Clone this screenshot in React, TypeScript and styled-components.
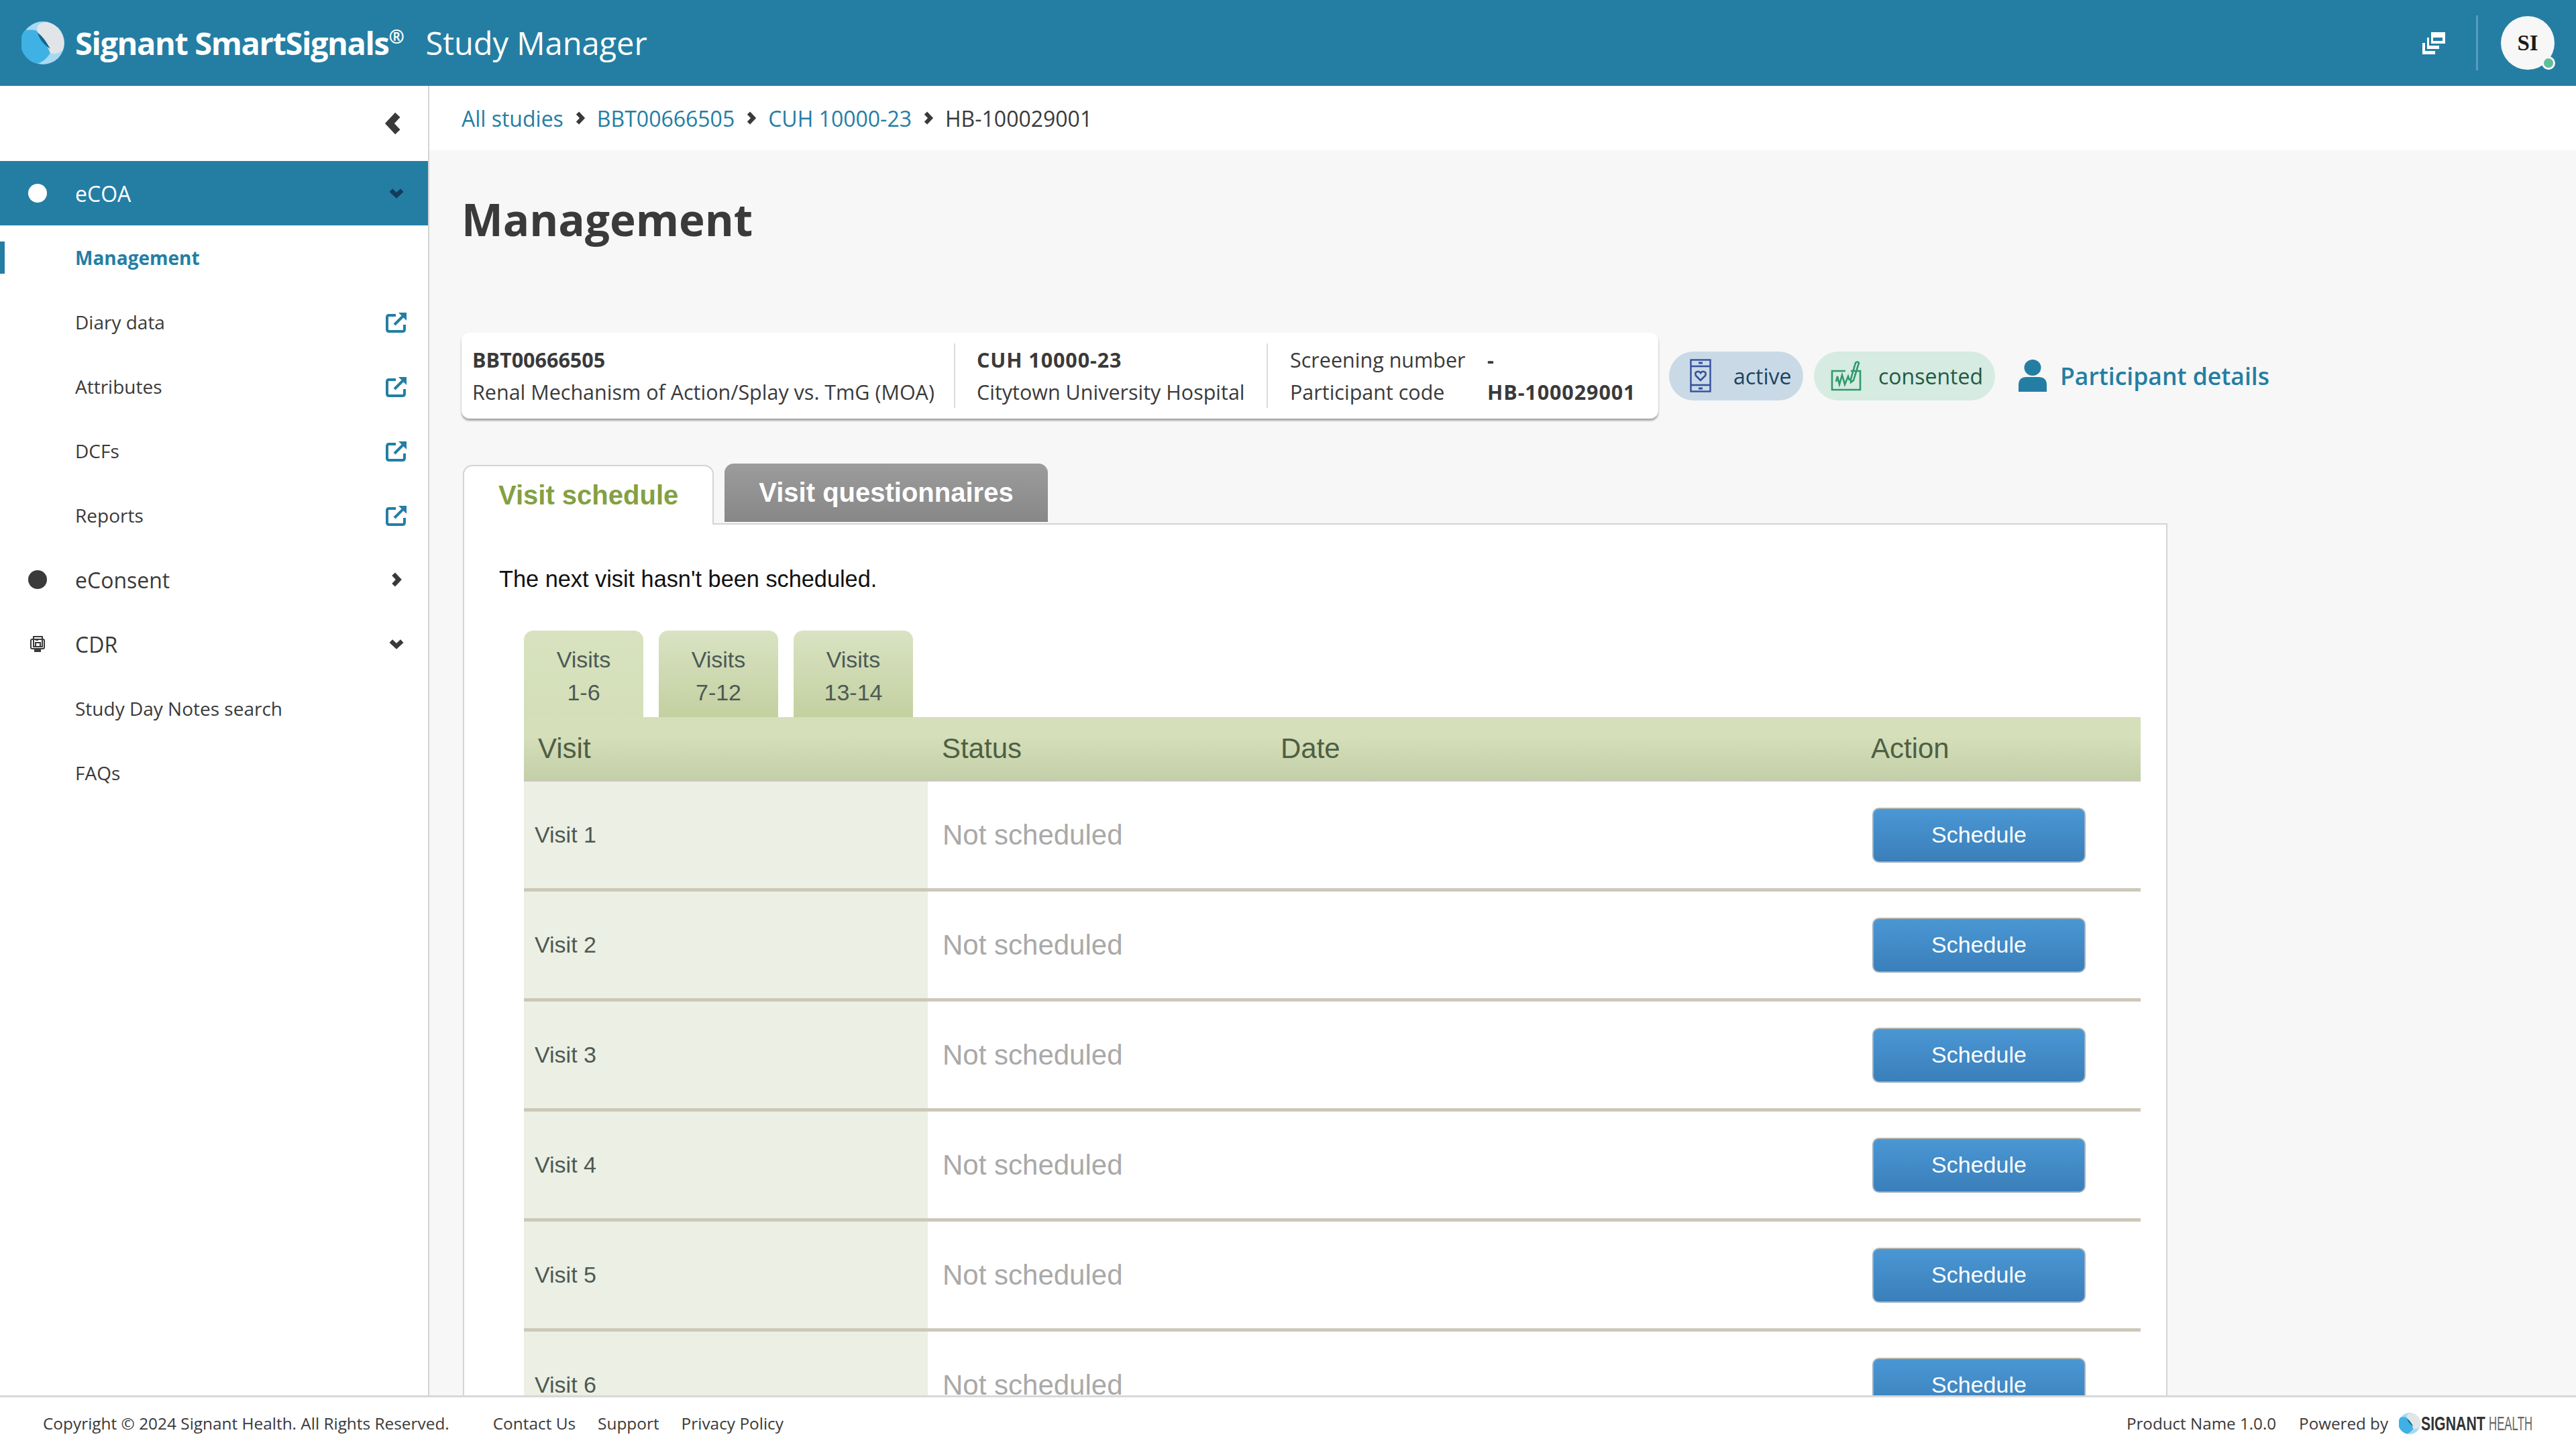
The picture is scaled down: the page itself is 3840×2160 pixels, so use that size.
import React from 'react'
import styled, { createGlobalStyle } from 'styled-components'

const GlobalStyle = createGlobalStyle`
  html, body {
    margin: 0;
    padding: 0;
    background: #fff;
  }
  * {
    box-sizing: border-box;
  }
`

const TEAL = '#247ea3'
const SANS = `"Open Sans", "Noto Sans", sans-serif`
const ARIAL = `"Liberation Sans", Arial, sans-serif`

const ROTATION = { right: 0, down: 90, left: 180 }

const Chevron = ({
  dir,
  size,
  color,
}: {
  dir: 'right' | 'down' | 'left'
  size: number
  color: string
}) => (
  <svg
    width={size}
    height={size}
    viewBox="0 0 20 20"
    fill="none"
    stroke={color}
    strokeWidth="6"
    transform={`rotate(${ROTATION[dir]})`}
  >
    <path d="M6 2.5 L13 10 L6 17.5" />
  </svg>
)

const Logo = ({ size }: { size: number }) => (
  <svg width={size} height={size} viewBox="0 0 64 64">
    <circle cx="32" cy="32" r="32" fill="#a8d8f2" />
    <path d="M4 14 C11 12 18 12 23 14 C30 24 38 34 43 47 C38 55 32 60 24 63 A32 32 0 0 1 4 14Z" fill="#3fb1e5" />
    <path d="M38 1 C30 1 25 4 24 8 L23 14 C30 24 38 34 43 47 C50 50 58 46 62 42 A32 32 0 0 0 38 1Z" fill="#e2e5e8" />
    <path d="M24 17 C32 22 38 32 43 41 C36 36 28 30 24 17Z" fill="#14668c" />
  </svg>
)

const WindowsIcon = () => (
  <svg width="34" height="33" viewBox="0 0 34 33">
    <path d="M13 0 H34 V17 H13Z M16 8 V13 H30 V8Z" fill="#fff" fillRule="evenodd" />
    <path d="M7 8 H10 V20 H25 V25 H7Z" fill="#fff" />
    <path d="M0 16 H4 V28 H19 V33 H0Z" fill="#fff" />
  </svg>
)

const ExternalIcon = () => (
  <svg width="32" height="32" viewBox="0 0 32 32" fill="none" stroke={TEAL} strokeWidth="4">
    <path d="M15 6 H5 Q2 6 2 9 V27 Q2 30 5 30 H25 Q28 30 28 27 V20" />
    <path d="M13 20 L27 6" />
    <path d="M19 2 H31 V14 Z" fill={TEAL} stroke="none" />
  </svg>
)

const RecordIcon = () => (
  <svg width="22" height="24" viewBox="0 0 22 24" fill="none" stroke="#3a3a3a" strokeWidth="2">
    <rect x="1" y="5" width="20" height="14" rx="2" />
    <rect x="5" y="1" width="13" height="15" />
    <rect x="8" y="4" width="4" height="3" fill="#3a3a3a" stroke="none" />
    <rect x="8" y="10" width="7" height="6" />
    <path d="M6 22 H16" strokeWidth="4" />
  </svg>
)

const PhoneIcon = () => (
  <svg width="32" height="50" viewBox="0 0 32 50" fill="none" stroke="#33509f" strokeWidth="2.4">
    <rect x="1.5" y="1.5" width="29" height="47" />
    <path d="M1.5 11 H30.5 M1.5 39 H30.5" />
    <path d="M13 6 H19 M13 44 H19" strokeWidth="3" />
    <path d="M16 32 L9 25 Q7 20 11 19 Q14 18 16 21 Q18 18 21 19 Q25 20 23 25Z" strokeWidth="2.6" />
  </svg>
)

const SignIcon = () => (
  <svg width="46" height="46" viewBox="0 0 46 46" fill="none" stroke="#2f9a6b" strokeWidth="2.6">
    <path d="M30 16 H44 V44 H2 V16 H22" />
    <path d="M8 32 L10 24 L13 36 L17 22 L21 36 L26 24 L28 30" />
    <path d="M30 28 L37 4 Q40 1 42 4 L34 30 L30 33Z" />
  </svg>
)

const PersonIcon = () => (
  <svg width="42" height="48" viewBox="0 0 42 48" fill={TEAL}>
    <ellipse cx="21" cy="12" rx="12.5" ry="12" />
    <path d="M0 48 V38 Q0 26 12 26 H30 Q42 26 42 38 V48Z" />
  </svg>
)

const sideItems = [
  { label: 'Management', active: true },
  { label: 'Diary data', link: true },
  { label: 'Attributes', link: true },
  { label: 'DCFs', link: true },
  { label: 'Reports', link: true },
]

const visits = [1, 2, 3, 4, 5, 6]

const App = (): React.ReactElement => {
  return (
    <Page>
      <GlobalStyle />
      <Header>
        <Brand>
          <Logo size={64} />
          <BrandName>
            Signant SmartSignals<sup>®</sup>
          </BrandName>
          <AppName>Study Manager</AppName>
        </Brand>
        <HeaderTools>
          <WindowsIcon />
          <ToolDivider />
          <Avatar>
            SI
            <StatusDot />
          </Avatar>
        </HeaderTools>
      </Header>

      <Body>
        <Sidebar>
          <CollapseRow>
            <Chevron dir="left" size={34} color="#3a3a3a" />
          </CollapseRow>
          <SectionRow $selected>
            <IconSlot>
              <Dot $color="#fff" />
            </IconSlot>
            <SectionLabel $selected>eCOA</SectionLabel>
            <TailSlot>
              <Chevron dir="down" size={22} color="#143a5c" />
            </TailSlot>
          </SectionRow>
          {sideItems.map((item) => (
            <SubRow key={item.label}>
              {item.active && <ActiveBar />}
              <SubLabel $active={item.active}>{item.label}</SubLabel>
              <TailSlot>{item.link && <ExternalIcon />}</TailSlot>
            </SubRow>
          ))}
          <SectionRow>
            <IconSlot>
              <Dot $color="#3a3a3a" />
            </IconSlot>
            <SectionLabel>eConsent</SectionLabel>
            <TailSlot>
              <Chevron dir="right" size={22} color="#3a3a3a" />
            </TailSlot>
          </SectionRow>
          <SectionRow>
            <IconSlot>
              <RecordIcon />
            </IconSlot>
            <SectionLabel>CDR</SectionLabel>
            <TailSlot>
              <Chevron dir="down" size={22} color="#3a3a3a" />
            </TailSlot>
          </SectionRow>
          <SubRow>
            <SubLabel>Study Day Notes search</SubLabel>
          </SubRow>
          <SubRow>
            <SubLabel>FAQs</SubLabel>
          </SubRow>
        </Sidebar>

        <Main>
          <Breadcrumbs>
            <Crumb>All studies</Crumb>
            <Chevron dir="right" size={20} color="#3a3a3a" />
            <Crumb>BBT00666505</Crumb>
            <Chevron dir="right" size={20} color="#3a3a3a" />
            <Crumb>CUH 10000-23</Crumb>
            <Chevron dir="right" size={20} color="#3a3a3a" />
            <CrumbCurrent>HB-100029001</CrumbCurrent>
          </Breadcrumbs>

          <Content>
            <Title>Management</Title>

            <SummaryRow>
              <Card>
                <StudyColumn>
                  <strong>BBT00666505</strong>
                  <span>Renal Mechanism of Action/Splay vs. TmG (MOA)</span>
                </StudyColumn>
                <SiteColumn>
                  <strong>CUH 10000-23</strong>
                  <span>Citytown University Hospital</span>
                </SiteColumn>
                <CardGrid>
                  <span>Screening number</span>
                  <strong>-</strong>
                  <span>Participant code</span>
                  <strong>HB-100029001</strong>
                </CardGrid>
              </Card>
              <Pill $bg="#c9dae6" $color="#1c4560" $width={200} $pad={31} $gap={33}>
                <PhoneIcon />
                active
              </Pill>
              <Pill $bg="#d6ebe2" $color="#1e5a44" $width={270} $pad={25} $gap={25}>
                <SignIcon />
                consented
              </Pill>
              <DetailsLink>
                <PersonIcon />
                Participant details
              </DetailsLink>
            </SummaryRow>

            <TabBar>
              <Tab $active>Visit schedule</Tab>
              <Tab>Visit questionnaires</Tab>
            </TabBar>

            <Panel>
              <Notice>The next visit hasn't been scheduled.</Notice>
              <SubTabs>
                <SubTab $active>
                  Visits
                  <br />
                  1-6
                </SubTab>
                <SubTab>
                  Visits
                  <br />
                  7-12
                </SubTab>
                <SubTab>
                  Visits
                  <br />
                  13-14
                </SubTab>
              </SubTabs>
              <TableHead>
                <span>Visit</span>
                <span>Status</span>
                <span>Date</span>
                <span>Action</span>
              </TableHead>
              {visits.map((n) => (
                <TableRow key={n}>
                  <VisitCell>Visit {n}</VisitCell>
                  <StatusCell>Not scheduled</StatusCell>
                  <ActionCell>
                    <ScheduleButton>Schedule</ScheduleButton>
                  </ActionCell>
                </TableRow>
              ))}
            </Panel>
          </Content>
        </Main>
      </Body>

      <Footer>
        <FooterLeft>
          <Copyright>Copyright © 2024 Signant Health. All Rights Reserved.</Copyright>
          <span>Contact Us</span>
          <span>Support</span>
          <span>Privacy Policy</span>
        </FooterLeft>
        <FooterRight>
          <span>Product Name 1.0.0</span>
          <PoweredBy>
            Powered by
            <Logo size={32} />
            <FooterBrand>
              <BrandBold>SIGNANT</BrandBold>
              <BrandLight>HEALTH</BrandLight>
            </FooterBrand>
          </PoweredBy>
        </FooterRight>
      </Footer>
    </Page>
  )
}

const Page = styled.div`
  width: 3840px;
  height: 2160px;
  display: flex;
  flex-direction: column;
  overflow: hidden;
  font-family: ${SANS};
  color: #3a3a3a;
`

const Header = styled.header`
  height: 128px;
  flex: none;
  background: ${TEAL};
  display: flex;
  align-items: center;
  justify-content: space-between;
  padding: 0 32px;
`

const Brand = styled.div`
  display: flex;
  align-items: center;
  color: #fff;
`

const BrandName = styled.div`
  margin-left: 16px;
  font-size: 47px;
  font-weight: 700;
  letter-spacing: -1.4px;

  sup {
    font-size: 28px;
    line-height: 0;
  }
`

const AppName = styled.div`
  margin-left: 33px;
  font-size: 47px;
`

const HeaderTools = styled.div`
  display: flex;
  align-items: center;
`

const ToolDivider = styled.div`
  width: 3px;
  height: 82px;
  background: #559dc0;
  margin: 0 34px 0 46px;
`

const Avatar = styled.div`
  position: relative;
  width: 80px;
  height: 80px;
  border-radius: 50%;
  background: #f7f7f7;
  display: flex;
  align-items: center;
  justify-content: center;
  font-family: "Liberation Serif", serif;
  font-weight: 700;
  font-size: 33px;
  color: #1c1c1c;
`

const StatusDot = styled.span`
  position: absolute;
  right: -1px;
  bottom: 0;
  width: 20px;
  height: 20px;
  border-radius: 50%;
  background: #5ebf9a;
  border: 3px solid #f7f7f7;
`

const Body = styled.div`
  flex: 1;
  min-height: 0;
  display: flex;
`

const Sidebar = styled.nav`
  width: 640px;
  flex: none;
  background: #fff;
  border-right: 2px solid #d4d4d4;
`

const CollapseRow = styled.div`
  height: 112px;
  display: flex;
  align-items: center;
  justify-content: flex-end;
  padding-right: 35px;
`

const SectionRow = styled.div<{ $selected?: boolean }>`
  height: 96px;
  display: flex;
  align-items: center;
  background: ${(p) => (p.$selected ? TEAL : 'transparent')};
`

const IconSlot = styled.div`
  width: 112px;
  display: flex;
  justify-content: center;
`

const Dot = styled.span<{ $color: string }>`
  width: 28px;
  height: 28px;
  border-radius: 50%;
  background: ${(p) => p.$color};
`

const SectionLabel = styled.span<{ $selected?: boolean }>`
  flex: 1;
  font-size: 32px;
  color: ${(p) => (p.$selected ? '#fff' : '#3a3a3a')};
`

const TailSlot = styled.div`
  width: 32px;
  margin-right: 31px;
  display: flex;
  justify-content: center;
`

const SubRow = styled.div`
  position: relative;
  height: 96px;
  display: flex;
  align-items: center;
  padding-left: 112px;
`

const ActiveBar = styled.span`
  position: absolute;
  left: 0;
  top: 24px;
  width: 7px;
  height: 48px;
  background: ${TEAL};
`

const SubLabel = styled.span<{ $active?: boolean }>`
  flex: 1;
  font-size: 28px;
  font-weight: ${(p) => (p.$active ? 700 : 400)};
  color: ${(p) => (p.$active ? TEAL : '#3a3a3a')};
`

const Main = styled.main`
  flex: 1;
  min-width: 0;
  background: #f7f7f7;
  overflow: hidden;
`

const Breadcrumbs = styled.div`
  height: 96px;
  background: #fff;
  display: flex;
  align-items: center;
  gap: 15px;
  padding-left: 48px;
  font-size: 32px;
`

const Crumb = styled.span`
  color: ${TEAL};
`

const CrumbCurrent = styled.span`
  color: #3a3a3a;
`

const Content = styled.div`
  padding: 0 0 0 48px;
`

const Title = styled.h1`
  margin: 0;
  height: 272px;
  padding-top: 57px;
  font-size: 65.5px;
  line-height: 92px;
  font-weight: 700;
  color: #3a3a3a;
`

const SummaryRow = styled.div`
  display: flex;
  align-items: center;
  height: 128px;
`

const Card = styled.div`
  width: 1784px;
  height: 128px;
  flex: none;
  background: #fff;
  border-radius: 12px;
  box-shadow: 0 3px 3px rgba(0, 0, 0, 0.35);
  display: flex;
  align-items: center;
  font-size: 30.5px;
  line-height: 48px;
  white-space: nowrap;
  color: #3a3a3a;
  margin-right: 16px;
`

const StudyColumn = styled.div`
  width: 736px;
  height: 96px;
  display: flex;
  flex-direction: column;
  padding-left: 16px;
  border-right: 2px solid #dcdcdc;
`

const SiteColumn = styled(StudyColumn)`
  width: 466px;
  padding-left: 32px;

  strong {
    letter-spacing: 0.9px;
  }
`

const CardGrid = styled.div`
  display: grid;
  grid-template-columns: 294px auto;
  padding-left: 33px;

  strong {
    letter-spacing: 0.9px;
  }
`

const Pill = styled.div<{
  $bg: string
  $color: string
  $width: number
  $pad: number
  $gap: number
}>`
  width: ${(p) => p.$width}px;
  height: 73px;
  flex: none;
  border-radius: 37px;
  background: ${(p) => p.$bg};
  color: ${(p) => p.$color};
  display: flex;
  align-items: center;
  gap: ${(p) => p.$gap}px;
  padding-left: ${(p) => p.$pad}px;
  margin-right: 16px;
  font-size: 32px;
`

const DetailsLink = styled.div`
  display: flex;
  align-items: center;
  gap: 20px;
  margin-left: 19px;
  font-size: 35.5px;
  font-weight: 600;
  color: ${TEAL};
`

const TabBar = styled.div`
  display: flex;
  align-items: flex-end;
  gap: 16px;
  height: 89px;
  margin-top: 67px;
  font-family: ${ARIAL};
  position: relative;
  z-index: 1;
`

const Tab = styled.div<{ $active?: boolean }>`
  height: ${(p) => (p.$active ? '89px' : '87px')};
  margin-left: ${(p) => (p.$active ? '2px' : '0')};
  margin-bottom: ${(p) => (p.$active ? '-2px' : '2px')};
  padding: 0 51px;
  display: flex;
  align-items: center;
  font-size: 40px;
  font-weight: 700;
  border-radius: 14px 14px 0 0;
  color: ${(p) => (p.$active ? '#83a044' : '#fff')};
  background: ${(p) => (p.$active ? '#fff' : 'linear-gradient(#9c9c9c, #878787)')};
  border: ${(p) => (p.$active ? '2px solid #d4d4d4' : 'none')};
  border-bottom: none;
`

const Panel = styled.section`
  width: 2541px;
  margin-left: 2px;
  background: #fff;
  border: 2px solid #d4d4d4;
  padding: 0 38px 0 52px;
  font-family: ${ARIAL};
`

const Notice = styled.p`
  margin: 0;
  height: 158px;
  padding-top: 58px;
  font-size: 34.3px;
  line-height: 46px;
  color: #111;
`

const SubTabs = styled.div`
  display: flex;
  gap: 23px;
  margin-left: 37px;
`

const SubTab = styled.div<{ $active?: boolean }>`
  width: 178px;
  height: 129px;
  padding-top: 19px;
  text-align: center;
  font-size: 34px;
  line-height: 49px;
  color: #4c5a55;
  border-radius: 14px 14px 0 0;
  background: ${(p) =>
    p.$active ? 'linear-gradient(#d8e2c0, #d4dfb9)' : 'linear-gradient(#d9e3c3, #c3d0a0)'};
`

const TableHead = styled.div`
  margin-left: 37px;
  height: 96px;
  display: grid;
  grid-template-columns: 602px 505px 880px 1fr;
  align-items: center;
  background: linear-gradient(#d5dfb9 30%, #c3cfa8);
  border-bottom: 2px solid #ccc8b8;
  font-size: 42px;
  color: #4f5f44;

  span {
    padding-left: 21px;
  }
`

const TableRow = styled.div`
  margin-left: 37px;
  height: 164px;
  display: grid;
  grid-template-columns: 602px 1fr 400px;
  border-bottom: 5px solid #ccc8b8;
`

const VisitCell = styled.div`
  background: #ecefe3;
  display: flex;
  align-items: center;
  padding-left: 16px;
  font-size: 34px;
  color: #4c5a55;
`

const StatusCell = styled.div`
  display: flex;
  align-items: center;
  padding-left: 22px;
  font-size: 42px;
  color: #a9a9a9;
`

const ActionCell = styled.div`
  display: flex;
  align-items: center;
`

const ScheduleButton = styled.button`
  width: 318px;
  height: 82px;
  border-radius: 10px;
  border: 2px solid #9fb3c4;
  border-top-color: #b5b5ad;
  background: linear-gradient(#4a97d4, #3a7fba);
  color: #fff;
  font-family: ${ARIAL};
  font-size: 34px;
`

const Footer = styled.footer`
  height: 80px;
  flex: none;
  background: #fff;
  border-top: 3px solid #d8d8d8;
  display: flex;
  align-items: center;
  justify-content: space-between;
  padding: 0 64px;
  font-size: 24.2px;
  color: #3a3a3a;
`

const FooterLeft = styled.div`
  display: flex;
  gap: 33px;
  font-size: 24.4px;
`

const Copyright = styled.span`
  margin-right: 32px;
`

const FooterRight = styled.div`
  display: flex;
  align-items: center;
  gap: 34px;
`

const PoweredBy = styled.div`
  display: flex;
  align-items: center;
  gap: 16px;
`

const FooterBrand = styled.span`
  display: flex;
  margin-left: -15px;
  font-family: ${ARIAL};
  font-size: 30px;
`

const BrandBold = styled.span`
  display: inline-block;
  width: 101px;
  font-weight: 700;
  color: #333;
  transform: scaleX(0.71);
  transform-origin: left;
`

const BrandLight = styled.span`
  display: inline-block;
  width: 66px;
  color: #666;
  transform: scaleX(0.56);
  transform-origin: left;
`

export default App
